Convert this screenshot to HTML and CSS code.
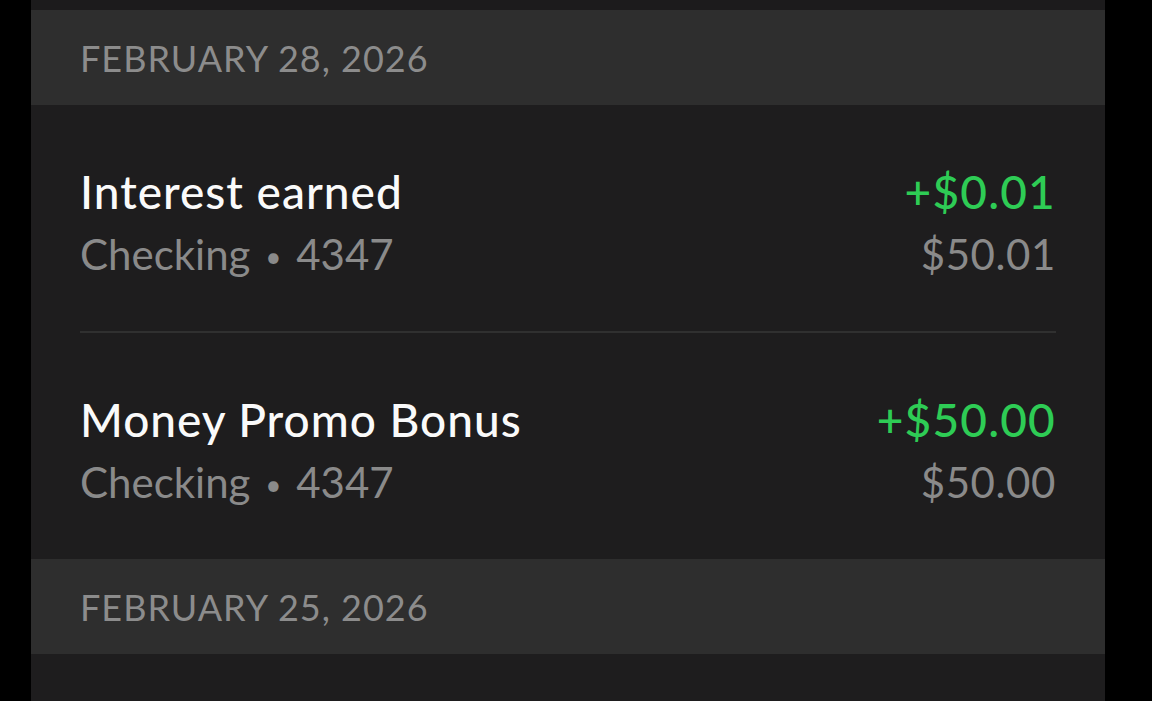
FILE: index.html
```html
<!DOCTYPE html>
<html>
<head>
<meta charset="utf-8">
<link rel="stylesheet" href="styles.css">
</head>
<body>
<div class="panel">
  <div class="topstrip"></div>
  <div class="date-header">FEBRUARY 28, 2026</div>
  <div class="group">
    <div class="txn">
      <div class="left">
        <div class="title">Interest earned</div>
        <div class="sub">Checking <span class="dot">•</span> 4347</div>
      </div>
      <div class="right">
        <div class="amount">+$0.01</div>
        <div class="balance">$50.01</div>
      </div>
    </div>
    <div class="divider"></div>
    <div class="txn">
      <div class="left">
        <div class="title">Money Promo Bonus</div>
        <div class="sub">Checking <span class="dot">•</span> 4347</div>
      </div>
      <div class="right">
        <div class="amount">+$50.00</div>
        <div class="balance">$50.00</div>
      </div>
    </div>
  </div>
  <div class="date-header">FEBRUARY 25, 2026</div>
  <div class="group rest"></div>
</div>
</body>
</html>
```

FILE: styles.css
```css
html, body {
  margin: 0;
  padding: 0;
  background: #000;
  height: 100%;
  overflow: hidden;
}
body {
  font-family: Lato, "Noto Sans", sans-serif;
}
.panel {
  margin-left: 31px;
  width: 1074px;
  height: 701px;
  background: #1e1d1e;
  display: flex;
  flex-direction: column;
}
.topstrip {
  height: 10px;
  background: #1c1b1c;
}
.date-header {
  height: 95px;
  background: #2e2e2e;
  color: #8c8c8c;
  font-size: 36px;
  letter-spacing: 1px;
  padding-left: 49px;
  display: flex;
  align-items: center;
}
.group {
  padding: 0 49px;
}
.rest {
  flex: 1;
}
.txn {
  display: flex;
  justify-content: space-between;
  padding: 56px 0 46px;
}
.title, .amount, .sub, .balance {
  line-height: 62px;
  font-size: 42px;
}
.title {
  color: #fafafa;
  font-size: 46px;
  font-weight: 500;
  letter-spacing: 1px;
}
.amount {
  color: #2ecc55;
  font-size: 46px;
  font-weight: 500;
  letter-spacing: 1.2px;
}
.sub, .balance {
  color: #8a8a8a;
}
.dot {
  font-size: 28px;
  line-height: 0;
  position: relative;
  top: -3px;
  margin: 0 4px;
}
.balance {
  letter-spacing: 0.6px;
}
.right {
  text-align: right;
}
.divider {
  height: 2px;
  background: #303030;
}
```
